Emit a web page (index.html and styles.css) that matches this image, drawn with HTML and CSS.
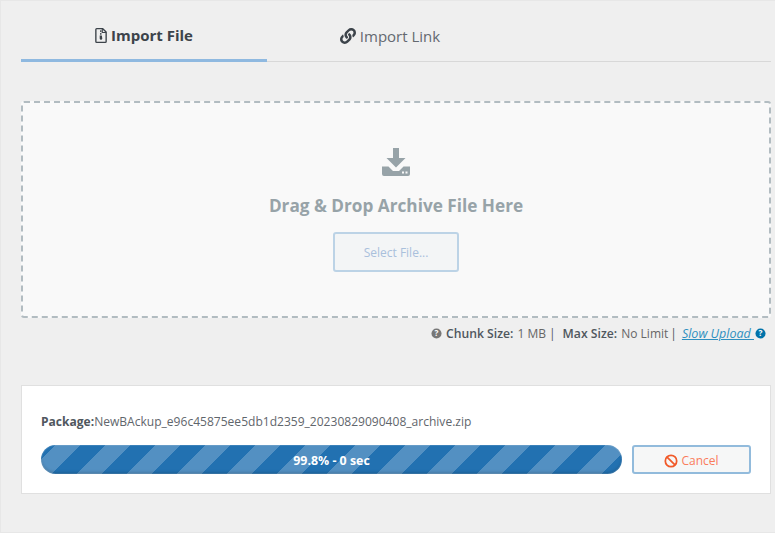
FILE: index.html
```html
<!DOCTYPE html>
<html lang="en">
<head>
  <meta charset="UTF-8" />
  <title>Import</title>
  <link rel="stylesheet" href="styles.css">
</head>
<body>
  <div class="tabs">
    <div class="tab active">
      <svg class="tab-icon" viewBox="0 0 14 18" width="12" height="17"><path d="M2 1h7l4 4v11a1 1 0 0 1-1 1H2a1 1 0 0 1-1-1V2a1 1 0 0 1 1-1z" fill="none" stroke="#3c434a" stroke-width="1.6"/><path d="M8.500 1v4.500H13" fill="none" stroke="#3c434a" stroke-width="1.300"/><path d="M6 3h1.500v2H6zM6 6h1.500v2H6zM5.500 9h2.500l.5 3.500a1.500 1.500 0 0 1-3 0z" fill="#3c434a"/></svg>
      <span>Import File</span>
    </div>
    <div class="tab">
      <svg class="tab-icon" viewBox="0 0 512 512" width="16" height="16"><path fill="#3c434a" d="M326.600 185.400c59.700 59.800 58.900 155.700.4 214.600l-67.200 67.200c-59.300 59.300-155.700 59.300-215 0-59.300-59.300-59.300-155.700 0-215l37.100-37.100c9.800-9.800 26.800-3.300 27.300 10.600.6 17.700 3.800 35.500 9.700 52.600 2 5.800.6 12.200-3.800 16.500l-13.100 13.100c-28 28-28.900 73.700-1.200 102 28 28.500 74.100 28.700 102.300.4l67.200-67.200c28.200-28.200 28.100-73.800 0-101.800-3.700-3.700-7.400-6.600-10.300-8.600-4.800-3.300-7.700-8.600-7.900-14.400-.4-10.600 3.400-21.500 11.700-29.800l21.100-21.100c5.500-5.500 14.200-6.200 20.600-1.700 7.400 5.200 14.300 11 20.100 16.900zM467.500 44.400c-59.300-59.300-155.700-59.300-215 0l-67.200 67.200c-58.500 58.900-59.300 154.800.4 214.600 5.800 5.900 12.700 11.700 20.100 16.900 6.400 4.500 15.100 3.800 20.600-1.700l21.100-21.100c8.300-8.300 12.100-19.200 11.700-29.800-.2-5.800-3.100-11.100-7.900-14.400-2.900-2-6.600-4.900-10.300-8.600-28.100-28-28.200-73.600 0-101.800l67.200-67.200c28.200-28.300 74.300-28.100 102.300.4 27.700 28.300 26.800 74-1.200 102l-13.100 13.100c-4.400 4.300-5.800 10.700-3.800 16.500 5.900 17.100 9.100 34.900 9.700 52.600.5 13.900 17.500 20.400 27.300 10.600l37.100-37.100c59.300-59.300 59.300-155.700 0-215z"/></svg>
      <span>Import Link</span>
    </div>
    <div class="tab-rest"></div>
  </div>

  <div class="drop-zone">
    <svg class="drop-icon" viewBox="0 0 28 28" width="28" height="28"><path fill="#97a3a8" d="M11 0h6v10h6.500L14 19.500 4.500 10H11z"/><path fill="#97a3a8" d="M0 18.500h6.500L11 23h6l4.500-4.500H28V26a2 2 0 0 1-2 2H2a2 2 0 0 1-2-2z"/><rect x="20" y="23.500" width="2" height="2" fill="#f9f9f9"/><rect x="23.500" y="23.500" width="2" height="2" fill="#f9f9f9"/></svg>
    <div class="drop-title">Drag &amp; Drop Archive File Here</div>
    <button class="select-btn" type="button">Select File...</button>
  </div>

  <div class="info-row">
    <svg class="help" viewBox="0 0 12 12" width="11" height="11"><circle cx="6" cy="6" r="5.500" fill="#777"/><text x="6" y="9.200" text-anchor="middle" class="help-mark">?</text></svg>
    <span class="info-text"><b>Chunk Size:</b> 1 MB<span class="sep">|</span><b>Max Size:</b> No Limit<span class="sep end">|</span><a class="slow-link" href="#">Slow Upload&nbsp;</a></span>
    <svg class="help" viewBox="0 0 12 12" width="11" height="11"><circle cx="6" cy="6" r="5.500" fill="#0073aa"/><text x="6" y="9.200" text-anchor="middle" class="help-mark">?</text></svg>
  </div>

  <div class="package-box">
    <div class="package-name"><b>Package:</b>NewBAckup_e96c45875ee5db1d2359_20230829090408_archive.zip</div>
    <div class="progress-row">
      <div class="progress-bar">99.8% - 0 sec</div>
      <button class="cancel-btn" type="button">
        <svg viewBox="0 0 16 16" width="14" height="14"><circle cx="8" cy="8" r="6.500" fill="none" stroke="#f15a29" stroke-width="2"/><path d="M3.500 3.500l9 9" stroke="#f15a29" stroke-width="2"/></svg>
        Cancel
      </button>
    </div>
  </div>
</body>
</html>
```

FILE: styles.css
```css
* { box-sizing: border-box; }
html, body { height: 100%; }
body { margin: 0; padding: 0 4px 0 20px; background: #efefef; border: 1px solid #e7e7e7; border-right: 0; overflow: hidden; font-family: "Open Sans", "Noto Sans", sans-serif; font-size: 12px; color: #50575e; }

.tabs { display: flex; height: 61px; }
.tab { width: 246px; display: flex; align-items: center; justify-content: center; gap: 4px; padding-top: 10px; font-size: 15px; color: #646970; border-bottom: 1px solid #d8d8d8; }
.tab.active { font-weight: 700; color: #3c434a; border-bottom: 3px solid #8fb9e0; }
.tab-rest { flex: 1; border-bottom: 1px solid #d8d8d8; }

.drop-zone { margin-top: 39px; height: 217px; background: #f9f9f9; border: 2px dashed #b2bcc1; border-radius: 3px; display: flex; flex-direction: column; align-items: center; padding-top: 45px; }
.drop-icon { display: block; }
.drop-title { margin-top: 18px; font-size: 17.2px; line-height: 24px; font-weight: 700; color: #97a3a8; }
.select-btn { margin-top: 14px; width: 126px; height: 40px; background: #f3f5f6; border: 2px solid #bcd3e6; border-radius: 3px; font-family: inherit; font-size: 12px; color: #a9c0dc; }

.info-row { display: flex; justify-content: flex-end; align-items: center; height: 18px; margin-top: 6px; padding-right: 5px; color: #666; font-size: 12px; }
.info-text { white-space: pre; }
.info-row b { color: #50575e; font-weight: 600; font-size: 12.2px; margin-right: 1px; }
.sep { margin: 0 7px 0 3px; color: #50575e; }
.sep.end { margin: 0 5px 0 2px; }
.help { margin-right: 4px; }
.info-row .help:last-child { margin: 0 0 0 1px; }
.help-mark { font: 700 9px "Open Sans", sans-serif; fill: #fff; }
.slow-link { color: #2e8fc0; font-style: italic; font-size: 12.5px; }

.package-box { margin-top: 43px; height: 109px; background: #fff; border: 1px solid #e0e0e0; padding: 27px 19px 0; }
.package-name { font-size: 12.06px; line-height: 18px; color: #5f666c; }
.package-name b { color: #50575e; font-weight: 700; }
.progress-row { display: flex; gap: 10px; margin-top: 14px; }
.progress-bar { width: 581px; height: 29px; border-radius: 15px; color: #fff; font-weight: 700; font-size: 12.4px; line-height: 31px; text-align: center; background: linear-gradient(135deg, rgba(255,255,255,.22) 25%, transparent 25%, transparent 50%, rgba(255,255,255,.22) 50%, rgba(255,255,255,.22) 75%, transparent 75%) 15px 0 / 50px 50px, #2271b1; box-shadow: inset 0 -2px 3px rgba(0,0,0,.15), inset 0 0 0 1px rgba(255,255,255,.12); }
.cancel-btn { width: 119px; height: 29px; padding: 2px 0 0; display: flex; align-items: center; justify-content: center; gap: 3px; background: #f6f7f7; border: 2px solid #92bbdc; border-radius: 3px; font-family: inherit; font-size: 12px; color: #fa7d5c; }
```
